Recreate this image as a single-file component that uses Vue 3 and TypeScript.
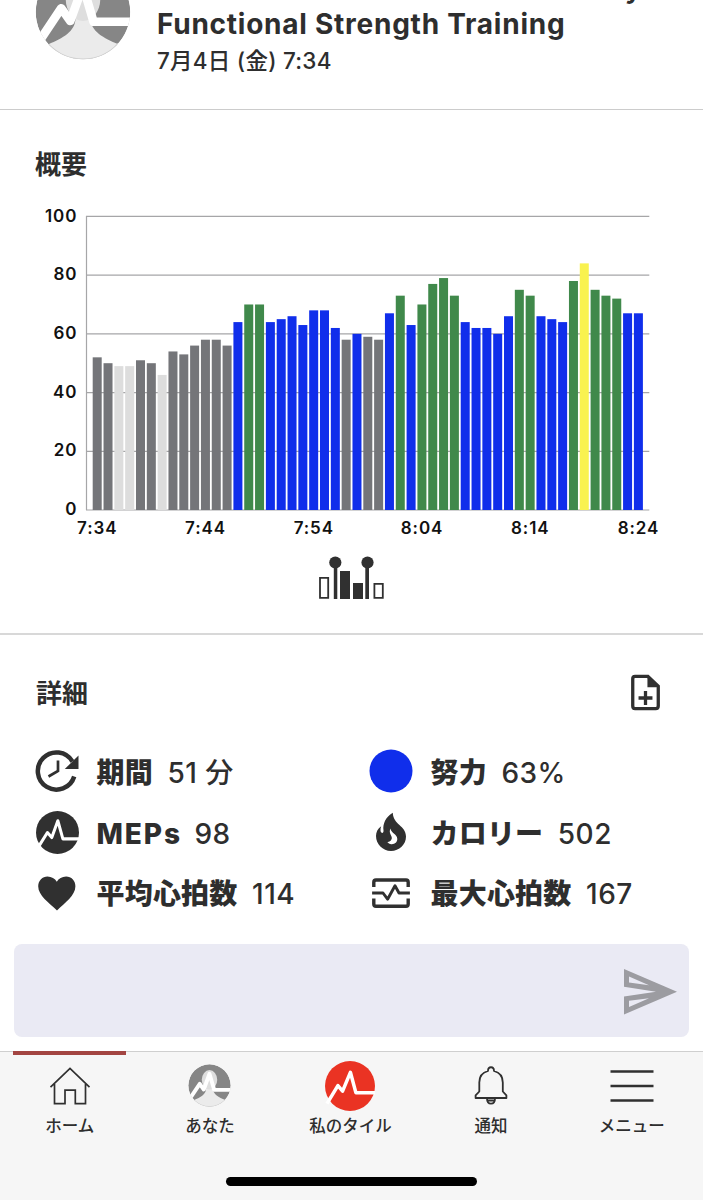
<script setup lang="ts">
interface Metric {
  icon: string
  label: string
  value: string
}

interface Tab {
  icon: string
  label: string
  active?: boolean
}

const effort: number[] = [
  52, 50, 49, 49, 51, 50, 46, 54, 53, 56, 58, 58, 56, 64, 70, 70, 64, 65, 66, 63,
  68, 68, 62, 58, 60, 59, 58, 67, 73, 63, 70, 77, 79, 73, 64, 62, 62, 60, 66, 75,
  73, 66, 65, 64, 78, 84, 75, 73, 72, 67, 67,
]

const baseY = 510
const unit = 2.936
const pitch = 10.824
const firstX = 92.7

function zone(v: number): string {
  if (v < 50) return 'rest'
  if (v < 60) return 'grey'
  if (v < 70) return 'blue'
  if (v < 80) return 'green'
  return 'yellow'
}

const bars = effort.map((v, i) => ({
  x: firstX + i * pitch,
  y: baseY - v * unit,
  h: v * unit,
  zone: zone(v),
}))

const gridLevels = [100, 80, 60, 40, 20, 0]
const times = ['7:34', '7:44', '7:54', '8:04', '8:14', '8:24']

const metrics: Metric[] = [
  { icon: 'duration', label: '期間', value: '51 分' },
  { icon: 'effort', label: '努力', value: '63%' },
  { icon: 'pulse', label: 'MEPs', value: '98' },
  { icon: 'flame', label: 'カロリー', value: '502' },
  { icon: 'heart', label: '平均心拍数', value: '114' },
  { icon: 'peak', label: '最大心拍数', value: '167' },
]

const tabs: Tab[] = [
  { icon: 'home', label: 'ホーム', active: true },
  { icon: 'person', label: 'あなた' },
  { icon: 'brand', label: '私のタイル' },
  { icon: 'bell', label: '通知' },
  { icon: 'menu', label: 'メニュー' },
]
</script>

<template>
  <div class="screen">
    <svg class="sprite" aria-hidden="true">
      <defs>
        <clipPath id="disc"><circle cx="0" cy="0" r="63" /></clipPath>
      </defs>
      <symbol id="person" viewBox="-64 -64 128 128">
        <g clip-path="url(#disc)">
          <circle r="63" fill="#868686" />
          <path d="M-70 70L-46 43C-27 35-10 26-10 8L10 8C10 26 28 35 47 43L70 70Z" fill="#ebebeb" />
          <ellipse cx="0" cy="-17" rx="23" ry="29" fill="#dedede" />
          <path d="M-57 37L-29 -5L-17 12L0 -35L14 13H66" fill="none" stroke="#fff" stroke-width="11.5" stroke-linejoin="round" />
          <path d="M-46 43A63 63 0 0 0 47 42" fill="none" stroke="#cfcfcf" stroke-width="2" />
        </g>
      </symbol>
      <symbol id="pulse" viewBox="0 0 128 128">
        <circle cx="64" cy="64" r="64" fill="#303030" />
        <path d="M4 112L34 64L47 79L65 29L80 83H132" fill="none" stroke="#fff" stroke-width="9" stroke-linejoin="round" />
      </symbol>
      <symbol id="brand" viewBox="0 0 128 128">
        <circle cx="64" cy="64" r="64" fill="#ea3323" />
        <path d="M5 109L33 63L45 77L65 29L79 81H132" fill="none" stroke="#fff" stroke-width="9" stroke-linejoin="round" />
      </symbol>
      <symbol id="duration" viewBox="0 0 44 44">
        <path d="M37.4 12.5A18.6 18.6 0 1 0 39.2 27.5" fill="none" stroke="#303030" stroke-width="4.5" />
        <path d="M43.5 6.5V20H29.8Z" fill="#303030" />
        <path d="M23 11.5V22L13.5 27.5" fill="none" stroke="#303030" stroke-width="2.7" />
      </symbol>
      <symbol id="effort" viewBox="0 0 44 44"><circle cx="22" cy="22" r="21.5" fill="#102eeb" /></symbol>
      <symbol id="flame" viewBox="0 0 44 44">
        <path d="M23.8 2.8C16.5 7 13.6 14 14.5 20.6C14.8 23.5 12 23.8 11.5 20.8C11.3 19.3 11.6 17.8 12.2 16.2C8.7 18.5 7 22 7 26C7 34 13.7 41 22 41S37 34.5 37 26.5C37 15.5 24.2 15 23.8 2.8ZM21.5 18.5C22.2 23.5 28.3 24 28.3 29C28.3 32.2 25.7 34.5 22.3 34.2C20.6 34 19.2 33.2 18.3 32C20.8 31.8 22.4 30.5 22.8 28.5C23.4 25.6 19.2 23.5 21.5 18.5Z" fill="#303030" fill-rule="evenodd" />
      </symbol>
      <symbol id="heart" viewBox="0 0 44 44">
        <path d="M22 39.5C14 31.5 3.2 24.5 3.2 15.2C3.2 9.8 7.5 5.6 12.5 5.6C16.5 5.6 20 7.7 21.8 10.7C23.6 7.7 27.1 5.6 31.1 5.6C36.3 5.6 40.4 9.8 40.4 15.2C40.4 24.5 30 31.5 22 39.5Z" fill="#303030" />
      </symbol>
      <symbol id="peak" viewBox="0 0 44 44">
        <g fill="none" stroke="#303030" stroke-width="3.4">
          <path d="M4.8 16V11.2Q4.8 9 7 9H37Q39.2 9 39.2 11.2V16" />
          <path d="M4.8 27.5V33Q4.8 35.2 7 35.2H37Q39.2 35.2 39.2 33V27.5" />
          <path d="M3.1 22H14L18.6 28.2L26 14.8L30 22H40.9" stroke-width="2.9" stroke-linejoin="round" />
        </g>
      </symbol>
      <symbol id="home" viewBox="0 0 50 50">
        <path d="M5.5 26.2L25 7.5L44.5 26.2M9.5 23V42.6H20V29.2H30.3V42.6H40.5V23" fill="none" stroke="#303030" stroke-width="1.7" />
      </symbol>
      <symbol id="bell" viewBox="0 0 50 50">
        <path d="M22 10C22 5 28 5 28 10C34 11.5 36.8 15.8 36.8 21.5V30.5L40.4 34.4V37H9.6V34.4L13.3 30.5V21.5C13.3 15.8 16 11.5 22 10ZM21 37.5C21 44.3 29 44.3 29 37.5M22 39.5H28" fill="none" stroke="#303030" stroke-width="1.8" stroke-linejoin="round" />
      </symbol>
      <symbol id="menu" viewBox="0 0 50 50">
        <path d="M3.5 10.5H46.5M3.5 25H46.5M3.5 39.5H46.5" stroke="#303030" stroke-width="2.3" />
      </symbol>
    </svg>

    <header class="top">
      <svg class="avatar"><use href="#person" /></svg>
      <div class="heading">
        <span class="overflow">y</span>
        <h1>Functional Strength Training</h1>
        <p>7月4日 (金) 7:34</p>
      </div>
    </header>

    <section class="summary">
      <h2>概要</h2>
      <svg class="chart" viewBox="0 195 703 350">
        <g class="grid">
          <line v-for="g in gridLevels" :key="g" x1="86" x2="649.3" :y1="baseY - g * unit" :y2="baseY - g * unit" />
          <line x1="86.5" x2="86.5" y1="216" :y2="baseY" />
        </g>
        <rect v-for="(b, i) in bars" :key="i" :class="b.zone" :x="b.x" :y="b.y" :height="b.h" width="9" />
        <text v-for="g in gridLevels" :key="'l' + g" class="axis level" x="77.3" :y="baseY - g * unit + 5.1">{{ g }}</text>
        <text v-for="(t, i) in times" :key="t" class="axis time" :x="97.3 + i * pitch * 10" y="534.3">{{ t }}</text>
      </svg>
      <svg class="range" viewBox="319 556 66 44" fill="#303030">
        <path d="M320 577.8H328.2V597.8H320ZM374.4 583.9H382.8V597.8H374.4Z" fill="none" stroke="#303030" stroke-width="1.8" />
        <path d="M333.8 565H337.3V599H333.8ZM340 571H350V599H340ZM353 583H363V599H353ZM365.3 565H369V599H365.3Z" />
        <circle cx="335.3" cy="562.5" r="6.1" /><circle cx="367.5" cy="562.5" r="6.1" />
      </svg>
    </section>

    <section class="details">
      <div class="detail-head">
        <h2>詳細</h2>
        <svg class="note" viewBox="0 0 30 37">
          <path d="M4.2 1.8H17.5L28.2 12V32.5Q28.2 35.2 25.5 35.2H4.2Q1.8 35.2 1.8 32.5V4.2Q1.8 1.8 4.2 1.8Z" fill="none" stroke="#303030" stroke-width="3.4" />
          <path d="M17 2L28 13H17Z" fill="#303030" />
          <path d="M15 17V31.5M7.8 24.2H22.2" stroke="#303030" stroke-width="3.4" />
        </svg>
      </div>
      <div class="metrics">
        <div v-for="m in metrics" :key="m.icon" class="metric">
          <svg :class="['m-icon', m.icon]"><use :href="'#' + m.icon" /></svg>
          <b :class="m.icon">{{ m.label }}</b>
          <span>{{ m.value }}</span>
        </div>
      </div>
    </section>

    <div class="composer">
      <svg viewBox="0 0 54 46">
        <path d="M0 0L53 22.8L0 45.5V27.5L32 22.8L0 17.8ZM5 7.5V13.5L25 16.2ZM5 31.8V38L25 29.2Z" fill="#9c9ca1" fill-rule="evenodd" />
      </svg>
    </div>

    <nav class="tabs">
      <div v-for="t in tabs" :key="t.icon" :class="['tab', { active: t.active }]">
        <svg :class="['t-icon', t.icon]"><use :href="'#' + t.icon" /></svg>
        <span>{{ t.label }}</span>
      </div>
      <i class="home-bar"></i>
    </nav>
  </div>
</template>

<style>
body {
  margin: 0;
  background: #fff;
}
</style>

<style scoped>
.screen {
  width: 703px;
  height: 1200px;
  overflow: hidden;
  display: flex;
  flex-direction: column;
  position: relative;
  background: #fff;
  color: #2e2e2e;
  font-family: Inter, "Noto Sans CJK JP", sans-serif;
}
* {
  box-sizing: border-box;
}
svg {
  display: block;
  flex: none;
}
h1, h2, p {
  margin: 0;
}
.sprite {
  position: absolute;
  width: 0;
  height: 0;
}
.top {
  height: 110px;
  flex: none;
  display: flex;
  border-bottom: 1px solid #cccccc;
}
.avatar {
  width: 96px;
  height: 96px;
  margin: -36px 0 0 35px;
}
.heading {
  margin: -28px 0 0 26px;
}
.overflow {
  display: block;
  height: 35px;
  line-height: 34px;
  padding-left: 468px;
  font-size: 27px;
  font-weight: 700;
}
h1 {
  height: 35px;
  line-height: 35px;
  font-size: 28px;
  font-weight: 700;
  letter-spacing: 0.75px;
  white-space: nowrap;
}
.heading p {
  height: 38px;
  line-height: 38px;
  font-size: 22.5px;
  font-weight: 500;
  letter-spacing: 0.25px;
}
.summary {
  height: 525px;
  flex: none;
  border-bottom: 2px solid #d8d8d8;
}
h2 {
  font-size: 26px;
  line-height: 36px;
  font-weight: 600;
}
.summary h2 {
  padding: 37px 0 0 35px;
  height: 85px;
}
.chart {
  width: 703px;
  height: 350px;
}
.grid line {
  stroke: #a6a6a8;
  stroke-width: 1.2;
}
.rest { fill: #dddddd; }
.grey { fill: #747579; }
.blue { fill: #102eeb; }
.green { fill: #40894b; }
.yellow { fill: #f9f24f; }
.axis {
  font-size: 17px;
  font-weight: 600;
  letter-spacing: 0.9px;
  fill: #111;
}
.level {
  text-anchor: end;
}
.time {
  text-anchor: middle;
}
.range {
  width: 66px;
  height: 44px;
  margin: 11px 0 0 319px;
}
.details {
  height: 309px;
  flex: none;
}
.detail-head {
  height: 106px;
  padding: 39px 43px 0 36px;
  display: flex;
  justify-content: space-between;
}
.detail-head h2 {
  padding-top: 2px;
}
.note {
  width: 29px;
  height: 37px;
}
.metrics {
  display: grid;
  grid-template-columns: 334px 334px;
  grid-auto-rows: 60.8px;
  padding-left: 35px;
}
.metric {
  display: flex;
  align-items: center;
  font-size: 28px;
  white-space: nowrap;
}
.m-icon {
  width: 44px;
  height: 44px;
  margin-right: 18px;
}
.m-icon.pulse {
  width: 43px;
  height: 43px;
  margin: 0 18px 0 1px;
}
.metric b,
.metric span {
  line-height: 40px;
  padding-top: 3px;
}
.metric b {
  font-weight: 800;
  margin: 0 14.5px 0 -0.5px;
  letter-spacing: 0.2px;
}
.metric b.pulse {
  letter-spacing: 1.9px;
  margin-right: 12.5px;
}
.metric span {
  font-weight: 450;
  letter-spacing: 0.5px;
}
.composer {
  height: 93px;
  flex: none;
  margin: 0 14px;
  background: #eaeaf4;
  border-radius: 8px;
  display: flex;
  align-items: center;
  justify-content: flex-end;
  padding: 3px 11px 0 0;
}
.composer svg {
  width: 54px;
  height: 46px;
}
.tabs {
  height: 149px;
  flex: none;
  margin-top: 14px;
  border-top: 1px solid #cfcfcf;
  background: #f6f6f6;
  display: grid;
  grid-template-columns: 139.6px repeat(4, 140.6px);
  position: relative;
}
.tab {
  height: 100px;
  display: flex;
  flex-direction: column;
  align-items: center;
  padding-top: 8.5px;
  position: relative;
  font-size: 16.5px;
  font-weight: 500;
}
.tab span {
  line-height: 24px;
  margin-top: 3px;
}
.tab.active::before {
  content: "";
  position: absolute;
  top: -1px;
  left: 13px;
  width: 113px;
  height: 4px;
  background: #a34542;
}
.t-icon {
  width: 50px;
  height: 50px;
}
.t-icon.person {
  width: 43px;
  height: 43px;
  margin: 3px 0 4px;
}
.home-bar {
  position: absolute;
  left: 226px;
  top: 125px;
  width: 251px;
  height: 9px;
  border-radius: 5px;
  background: #000;
}
</style>
